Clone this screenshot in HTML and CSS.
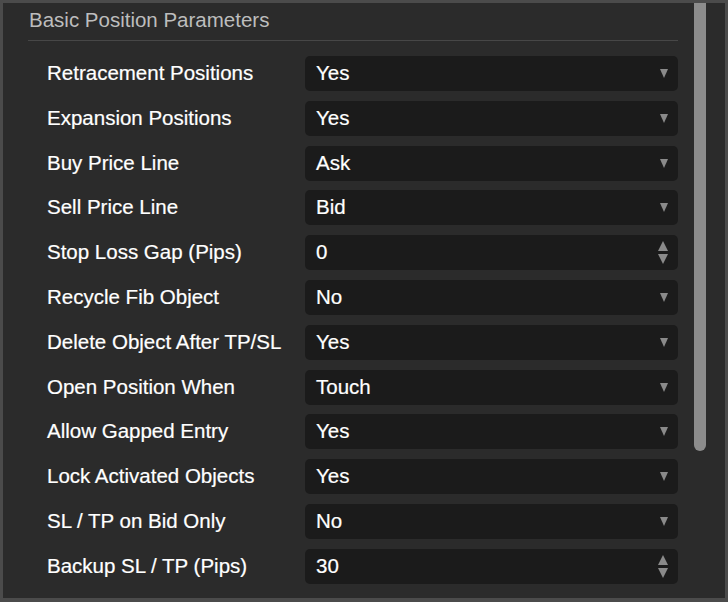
FILE: index.html
```html
<!DOCTYPE html>
<html>
<head>
<meta charset="utf-8">
<link rel="stylesheet" href="styles.css">
</head>
<body>
<div class="frame">
  <div class="panel">
    <div class="content">
      <div class="title">Basic Position Parameters</div>
      <div class="rows">
        <div class="row"><div class="label">Retracement Positions</div><div class="field"><span>Yes</span><span class="arrow"></span></div></div>
        <div class="row"><div class="label">Expansion Positions</div><div class="field"><span>Yes</span><span class="arrow"></span></div></div>
        <div class="row"><div class="label">Buy Price Line</div><div class="field"><span>Ask</span><span class="arrow"></span></div></div>
        <div class="row"><div class="label">Sell Price Line</div><div class="field"><span>Bid</span><span class="arrow"></span></div></div>
        <div class="row"><div class="label">Stop Loss Gap (Pips)</div><div class="field"><span>0</span><span class="spin"><span class="up"></span><span class="down"></span></span></div></div>
        <div class="row"><div class="label">Recycle Fib Object</div><div class="field"><span>No</span><span class="arrow"></span></div></div>
        <div class="row"><div class="label">Delete Object After TP/SL</div><div class="field"><span>Yes</span><span class="arrow"></span></div></div>
        <div class="row"><div class="label">Open Position When</div><div class="field"><span>Touch</span><span class="arrow"></span></div></div>
        <div class="row"><div class="label">Allow Gapped Entry</div><div class="field"><span>Yes</span><span class="arrow"></span></div></div>
        <div class="row"><div class="label">Lock Activated Objects</div><div class="field"><span>Yes</span><span class="arrow"></span></div></div>
        <div class="row"><div class="label">SL / TP on Bid Only</div><div class="field"><span>No</span><span class="arrow"></span></div></div>
        <div class="row"><div class="label">Backup SL / TP (Pips)</div><div class="field"><span>30</span><span class="spin"><span class="up"></span><span class="down"></span></span></div></div>
      </div>
    </div>
    <div class="scrollbar"><div class="thumb"></div></div>
  </div>
</div>
</body>
</html>
```

FILE: styles.css
```css
html, body {
  margin: 0;
  padding: 0;
  background: #4b4b4b;
}
body {
  width: 728px;
  height: 602px;
  overflow: hidden;
  font-family: "Liberation Sans", Arial, sans-serif;
}
.frame {
  padding: 3px 3px 4px 3px;
  height: 602px;
  box-sizing: border-box;
}
.panel {
  display: flex;
  height: 100%;
  background: #2b2b2b;
}
.content {
  flex: 1;
  padding-left: 25px;
  padding-right: 16px;
}
.title {
  color: #bdbdbd;
  font-size: 20.5px;
  height: 38px;
  line-height: 34px;
  border-bottom: 1px solid #474747;
  box-sizing: border-box;
  padding-left: 1px;
}
.rows {
  display: flex;
  flex-direction: column;
  gap: 9.8px;
  padding-top: 15px;
  padding-left: 19px;
}
.row {
  display: grid;
  grid-template-columns: 258px 1fr;
  align-items: center;
  height: 35px;
}
.label {
  color: #ffffff;
  font-size: 20.5px;
  padding-bottom: 1px;
  -webkit-text-stroke: 0.2px #ffffff;
}
.field {
  height: 35px;
  box-sizing: border-box;
  background: #1b1b1b;
  border-radius: 5px;
  display: flex;
  align-items: center;
  justify-content: space-between;
  padding: 0 9px 1px 11px;
  color: #ffffff;
  font-size: 20.5px;
  -webkit-text-stroke: 0.2px #ffffff;
}
.arrow {
  width: 0;
  height: 0;
  border-left: 4.5px solid transparent;
  border-right: 4.5px solid transparent;
  border-top: 9px solid #8a8a8a;
  margin-right: 1px;
  margin-top: 1px;
}
.spin {
  display: flex;
  flex-direction: column;
  gap: 3px;
  margin-right: 1px;
  margin-top: 1px;
}
.spin .up {
  width: 0;
  height: 0;
  border-left: 5px solid transparent;
  border-right: 5px solid transparent;
  border-bottom: 10px solid #8a8a8a;
}
.spin .down {
  width: 0;
  height: 0;
  border-left: 5px solid transparent;
  border-right: 5px solid transparent;
  border-top: 10px solid #8a8a8a;
}
.scrollbar {
  width: 31px;
  background: #2b2b2b;
}
.thumb {
  width: 12px;
  height: 448px;
  background: #8c8c8c;
  border-radius: 0 0 6px 6px;
}
```
